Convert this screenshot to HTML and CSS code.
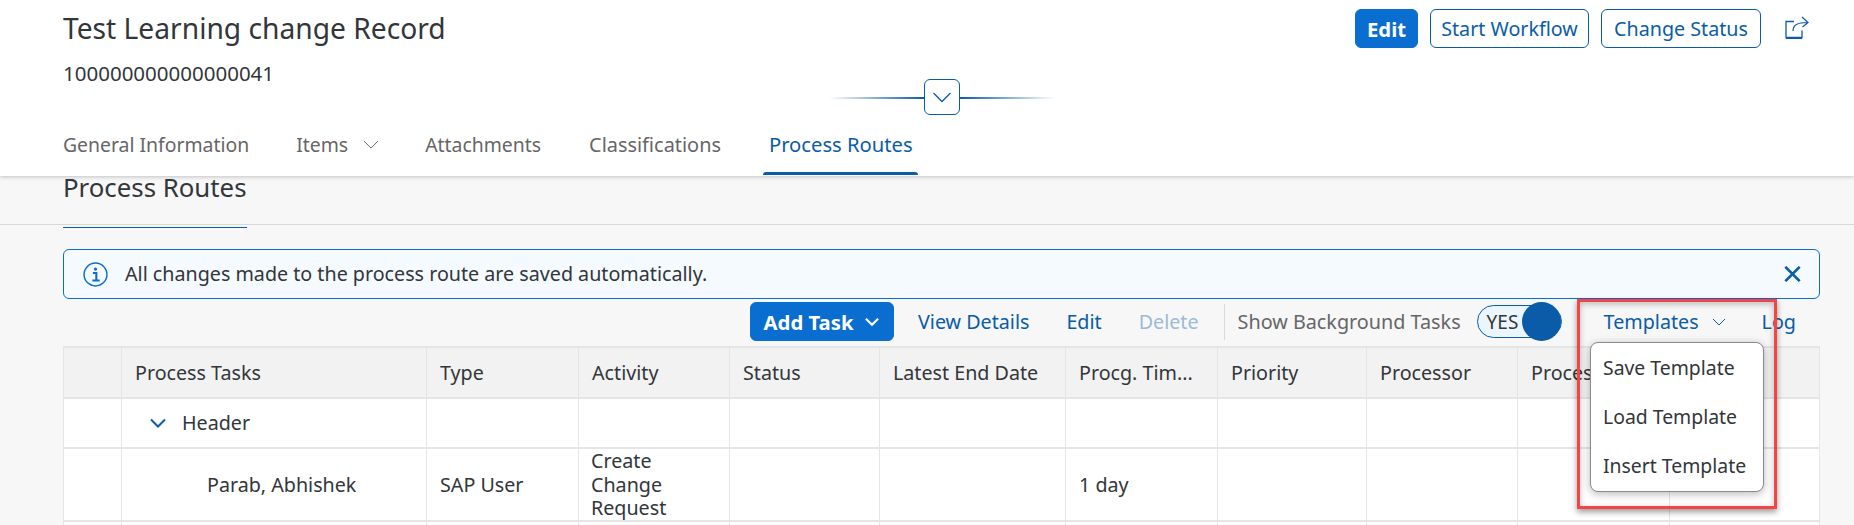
FILE: index.html
```html
<!DOCTYPE html>
<html lang="en">
<head>
<meta charset="utf-8">
<title>Process Routes</title>
<link rel="stylesheet" href="styles.css">
</head>
<body>
<header class="page-header">
  <div class="title-row">
    <h1 class="title">Test Learning change Record</h1>
    <div class="actions">
      <button class="btn btn-primary">Edit</button>
      <button class="btn btn-outline">Start Workflow</button>
      <button class="btn btn-outline btn-status">Change Status</button>
      <svg class="share-icon" viewBox="0 0 24 23" fill="none"><path d="M9 5.500H1v16h16v-7" stroke="#0a5ca8" stroke-width="1.300"/><path d="M1 22h16" stroke="#0a5ca8" stroke-width="2"/><path d="M8 15c0-6 4-8.500 15-8.500M17 1l6 5.500-5.500 4.500" stroke="#0a5ca8" stroke-width="1.200"/></svg>
    </div>
  </div>
  <div class="subtitle">100000000000000041</div>
  <div class="collapse-row">
    <span class="fade fade-left"></span>
    <button class="collapse-btn"><svg viewBox="0 0 20 12" class="collapse-chev" fill="none"><path d="M1.500 2l8.500 8.500L18.500 2" stroke="#0a5ca8" stroke-width="1.300"/></svg></button>
    <span class="fade fade-right"></span>
  </div>
  <nav class="tabs">
    <a class="tab tab-general">General Information</a>
    <a class="tab tab-items">Items <svg class="tab-chev" viewBox="0 0 18 10" fill="none"><path d="M1 1l8 8 8-8" stroke="#666" stroke-width="1.100"/></svg></a>
    <a class="tab">Attachments</a>
    <a class="tab tab-class">Classifications</a>
    <a class="tab tab-active">Process Routes</a>
  </nav>
</header>

<main class="content">
  <div class="section-head"><h2 class="section-title">Process Routes</h2></div>

  <div class="strip">
    <svg class="info-icon" viewBox="0 0 24 24" fill="none"><circle cx="12" cy="12" r="11" stroke="#0a6ed1" stroke-width="1.400"/><circle cx="12" cy="6.800" r="1.600" fill="#0a6ed1"/><path d="M9.500 10.500h3.300v7M9 17.700h7" stroke="#0a6ed1" stroke-width="2"/></svg>
    <span class="strip-text">All changes made to the process route are saved automatically.</span>
    <svg class="close-icon" viewBox="0 0 16 16" fill="none"><path d="M.8 .8l14.400 14.400M15.200 .8L.8 15.200" stroke="#0a5ca8" stroke-width="2.600"/></svg>
  </div>

  <div class="toolbar">
    <button class="btn btn-primary btn-add">Add Task <svg class="add-chev" viewBox="0 0 14 9" fill="none"><path d="M1.500 1.500L7 7l5.500-5.500" stroke="#fff" stroke-width="2"/></svg></button>
    <a class="tool-link link-view">View Details</a>
    <a class="tool-link link-edit">Edit</a>
    <a class="tool-link link-delete">Delete</a>
    <span class="tool-sep"></span>
    <span class="tool-label">Show Background Tasks</span>
    <span class="toggle"><span class="toggle-text">YES</span><span class="toggle-knob"></span></span>
    <a class="tool-link link-templates">Templates <svg class="tmpl-chev" viewBox="0 0 14 8" fill="none"><path d="M1 1l6 6 6-6" stroke="#0a5ca8" stroke-width="1"/></svg></a>
    <a class="tool-link link-log">Log</a>
  </div>

  <div class="grid">
    <div class="cell head"></div>
    <div class="cell head">Process Tasks</div>
    <div class="cell head">Type</div>
    <div class="cell head">Activity</div>
    <div class="cell head">Status</div>
    <div class="cell head">Latest End Date</div>
    <div class="cell head">Procg. Tim...</div>
    <div class="cell head">Priority</div>
    <div class="cell head">Processor</div>
    <div class="cell head">Process</div>
    <div class="cell head"></div>

    <div class="cell row-a"></div>
    <div class="cell row-a header-cell"><svg class="row-chev" viewBox="0 0 16 10" fill="none"><path d="M1 1.500l7 7 7-7" stroke="#0a5ca8" stroke-width="2"/></svg>Header</div>
    <div class="cell row-a"></div><div class="cell row-a"></div><div class="cell row-a"></div><div class="cell row-a"></div><div class="cell row-a"></div><div class="cell row-a"></div><div class="cell row-a"></div><div class="cell row-a"></div><div class="cell row-a"></div>

    <div class="cell row-b"></div>
    <div class="cell row-b person">Parab, Abhishek</div>
    <div class="cell row-b">SAP User</div>
    <div class="cell row-b activity">Create Change Request</div>
    <div class="cell row-b"></div><div class="cell row-b"></div>
    <div class="cell row-b">1 day</div>
    <div class="cell row-b"></div><div class="cell row-b"></div><div class="cell row-b"></div><div class="cell row-b"></div>

    <div class="cell row-c"></div><div class="cell row-c"></div><div class="cell row-c"></div><div class="cell row-c"></div><div class="cell row-c"></div><div class="cell row-c"></div><div class="cell row-c"></div><div class="cell row-c"></div><div class="cell row-c"></div><div class="cell row-c"></div><div class="cell row-c"></div>
  </div>
</main>

<div class="menu">
  <div class="menu-item">Save Template</div>
  <div class="menu-item">Load Template</div>
  <div class="menu-item">Insert Template</div>
</div>
<div class="annotation"></div>
</body>
</html>
```

FILE: styles.css
```css
* { box-sizing: border-box; }
html, body { margin: 0; height: 525px; overflow: hidden; }
body {
  position: relative;
  background: #f7f7f7;
  font-family: "Noto Sans", "Open Sans", sans-serif;
  font-size: 19.700px;
  color: #32363a;
}
button { font: inherit; cursor: pointer; }

.page-header {
  position: relative;
  z-index: 2;
  height: 176px;
  background: #fff;
  box-shadow: 0 1px 4px rgba(0,0,0,.22);
  padding: 9px 45px 0 63px;
}
.title-row { display: flex; justify-content: space-between; align-items: flex-start; height: 39px; }
.title { margin: 0; font-size: 28.200px; font-weight: 400; line-height: 39px; color: #32363a; }
.actions { display: flex; align-items: center; height: 39px; }
.btn { height: 39px; border-radius: 6px; padding: 0; font-size: 19.700px; }
.btn-primary { background: #0a6ed1; color: #fff; border: 1px solid #0a6ed1; font-weight: 700; width: 63px; font-size: 20.300px; }
.btn-outline { background: #fff; color: #0a5ca8; border: 1px solid #0a5ca8; width: 159px; margin-left: 12px; }
.btn-status { width: 160px; }
.share-icon { width: 24px; height: 23px; margin-left: 24px; margin-top: -3px; }
.subtitle { font-size: 20.500px; line-height: 24px; margin-top: 13px; }

.collapse-row { display: flex; align-items: center; justify-content: center; height: 36px; margin-top: -6px; padding-left: 12px; }
.fade { width: 95px; height: 2px; margin-top: 2px; }
.fade-left { background: linear-gradient(to right, rgba(10,92,168,0), #0a5ca8); }
.fade-right { background: linear-gradient(to left, rgba(10,92,168,0), #0a5ca8); }
.collapse-btn { width: 36px; height: 36px; padding: 0; background: #fff; border: 1px solid #0a5ca8; border-radius: 6px; display: flex; align-items: center; justify-content: center; }
.collapse-chev { width: 20px; height: 12px; }

.tabs { display: flex; height: 61px; margin-top: -1px; padding-top: 1px; }
.tab { display: flex; align-items: center; height: 59px; color: #666; margin-right: 48px; white-space: nowrap; position: relative; font-size: 19.400px; }
.tab-general { margin-right: 47px; }
.tab-chev { width: 16px; height: 9px; margin-left: 15px; }
.tab-items { margin-right: 46px; }
.tab-class { font-size: 19.900px; }
.tab-active { color: #0a5ca8; font-size: 20.200px; padding-bottom: 2px; }
.tab-active::after { content: ""; position: absolute; left: -6px; right: -5px; bottom: -1px; height: 3px; background: #0a5ca8; border-radius: 3px 3px 0 0; }

.content { padding: 0 34px 0 63px; }
.section-head { height: 49px; margin: 0 -34px 0 -63px; padding-left: 63px; border-bottom: 1px solid #d9d9d9; }
.section-title { display: inline-block; margin: 0; height: 49px; font-size: 25.800px; font-weight: 400; line-height: 16px; border-bottom: 1px solid #0a5ca8; color: #32363a; }

.strip { display: flex; align-items: center; height: 50px; margin-top: 24px; padding: 0 18px 0 19px; background: #f5faff; border: 1px solid #0a6ed1; border-radius: 6px; }
.info-icon { width: 25px; height: 25px; flex: none; }
.strip-text { margin: 0 0 2px 17px; flex: 1; }
.close-icon { width: 17px; height: 16px; flex: none; }

.toolbar { display: flex; align-items: center; height: 47px; padding-bottom: 2px; }
.btn-add { margin-left: 687px; width: 144px; flex: none; display: flex; align-items: center; justify-content: center; gap: 11px; }
.add-chev { width: 16px; height: 10px; }
.tool-link { color: #0a5ca8; white-space: nowrap; }
.link-view { margin-left: 24px; }
.link-edit { margin-left: 37px; }
.link-delete { margin-left: 37px; color: #9dbad6; }
.tool-sep { width: 1px; height: 36px; background: #d9d9d9; margin-left: 25px; }
.tool-label { margin-left: 13px; color: #666; white-space: nowrap; font-size: 19.800px; }
.toggle { position: relative; display: flex; align-items: center; flex: none; width: 85px; height: 33px; margin-left: 16px; padding-left: 9px; background: #ebf5fe; border: 1px solid #0a5ca8; border-radius: 17px; }
.toggle-text { font-size: 19px; }
.toggle-knob { position: absolute; right: 0; top: -4px; width: 39px; height: 39px; border-radius: 50%; background: #0a5ca8; }
.link-templates { margin-left: 42px; display: flex; align-items: center; }
.tmpl-chev { width: 14px; height: 8px; margin-left: 13px; }
.link-log { margin-left: 36px; }

.grid {
  display: grid;
  grid-template-columns: 59px 305px 152px 151px 150px 186px 152px 149px 151px 152px 150px;
  grid-template-rows: 51px 50px 73px 3px;
  border-top: 2px solid #e5e5e5;
}
.cell { display: flex; align-items: center; min-width: 0; padding: 0 12px 0 13px; background: #fff; border-right: 1px solid #e5e5e5; border-bottom: 2px solid #e5e5e5; line-height: 24px; white-space: nowrap; }
.cell:nth-child(11n+1) { border-left: 1px solid #e5e5e5; }
.head { background: #f2f2f2; }
.row-c { border-bottom: 0; }
.header-cell { padding-left: 28px; }
.row-chev { width: 16px; height: 10px; margin-right: 16px; flex: none; }
.person { padding-left: 85px; }
.activity { white-space: normal; padding: 0 30px 0 12px; line-height: 23.600px; }

.menu {
  position: absolute;
  left: 1590px;
  top: 342px;
  z-index: 3;
  width: 174px;
  height: 150px;
  padding: 0 12px;
  background: #fff;
  border: 1px solid #8a8a8a;
  border-radius: 8px;
  box-shadow: 0 2px 8px rgba(0,0,0,.28);
  display: flex;
  flex-direction: column;
  justify-content: space-around;
}
.menu-item { white-space: nowrap; line-height: 24px; font-size: 19.400px; }
.annotation {
  position: absolute;
  left: 1577px;
  top: 299px;
  z-index: 4;
  width: 200px;
  height: 210px;
  border: 3px solid #f54444;
  box-shadow: 0 3px 6px rgba(0,0,0,.4), inset 0 2px 6px rgba(0,0,0,.25);
  pointer-events: none;
}
```
